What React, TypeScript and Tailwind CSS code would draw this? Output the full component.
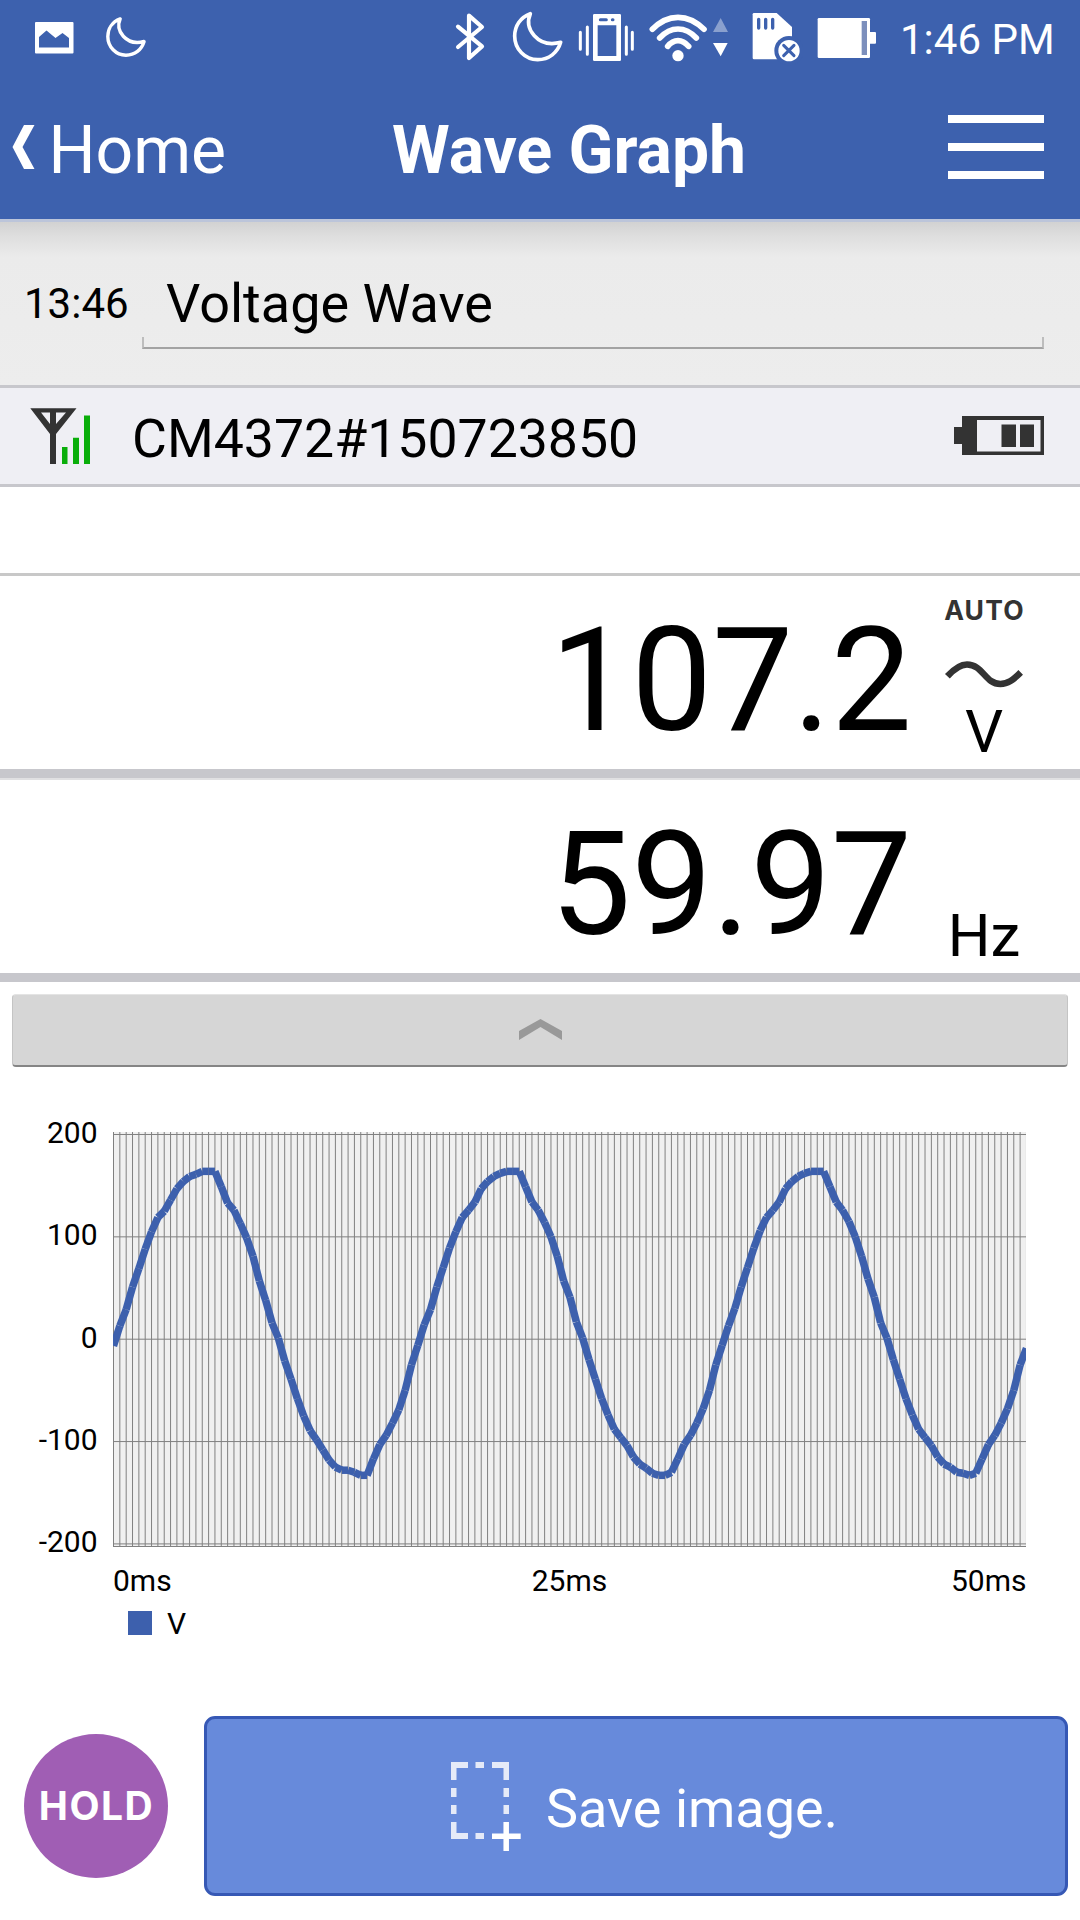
import * as React from "react";
import { useState } from "react";

// sampled voltage, 144 intervals over 50ms
const samples = [
  -6.6, 13, 29, 51, 69, 88, 105, 119, 125, 136, 147, 154, 159, 161, 164, 164,
  164, 149, 133, 126, 113, 99, 81, 57, 38, 16, 1, -21, -39, -58, -75, -89, -98,
  -108, -118, -125, -128, -128, -130, -133, -133, -117, -103, -94, -82, -69,
  -50, -25, -6, 14, 29, 51, 70, 89, 105, 119, 126, 134, 147, 154, 159, 162,
  164, 164, 164, 149, 134, 126, 114, 100, 81, 57, 41, 17, 1, -20, -39, -58,
  -74, -88, -96, -104, -115, -122, -126, -131, -133, -133, -130, -117, -103,
  -94, -82, -68, -50, -25, -6, 13, 30, 51, 70, 89, 106, 119, 126, 134, 147,
  154, 159, 162, 164, 164, 164, 149, 134, 126, 115, 100, 81, 59, 41, 16, 1,
  -20, -39, -58, -74, -88, -96, -104, -115, -122, -125, -130, -131, -133, -131,
  -117, -103, -94, -82, -68, -50, -25, -9,
];

const LEFT = 113.5;
const STEP = 6.34;
const ZERO = 273.2;
const px = (i: number) => LEFT + i * STEP;
const py = (v: number) => ZERO - v * 1.0235;

const MOON =
  "M58 41 C28 52 11 78 11 108 C11 148 42 179 80 179 C114 179 140 158 149 127 C115 136 88 127 70 107 C53 88 48 64 58 41Z";

const StatusBar = () => (
  <div className="flex h-[72px] items-start pl-[33px] text-white">
    <svg width="43" height="72" viewBox="33 0 43 72" fill="currentColor">
      <path
        fillRule="evenodd"
        d="M36 22H72.500a1 1 0 0 1 1 1V52.500a1 1 0 0 1-1 1H36a1 1 0 0 1-1-1V23a1 1 0 0 1 1-1ZM39 47.500H69V38L62.500 33L55.500 38L46.500 30.500L39 37Z"
      />
    </svg>
    <svg
      className="ml-[28px]"
      width="46"
      height="72"
      viewBox="-2 -31 172 274"
      fill="none"
      stroke="currentColor"
      strokeWidth="13"
      strokeLinejoin="round"
    >
      <path d={MOON} />
    </svg>

    <svg
      className="ml-[304px]"
      width="32"
      height="72"
      viewBox="42 0 96 216"
      fill="none"
      stroke="currentColor"
      strokeWidth="12.5"
      strokeLinecap="round"
      strokeLinejoin="round"
    >
      <path d="M54 80L126 139L87 174V47L126 81L54 141" />
    </svg>
    <svg
      className="ml-6"
      width="54"
      height="72"
      viewBox="-3 0 162 216"
      fill="none"
      stroke="currentColor"
      strokeWidth="11"
      strokeLinejoin="round"
    >
      <path d={MOON} />
    </svg>
    <svg className="ml-[13px]" width="58" height="72" viewBox="411 0 174 216">
      <path
        fill="currentColor"
        fillRule="evenodd"
        d="M463 42H539a4 4 0 0 1 4 4V179a4 4 0 0 1-4 4H463a4 4 0 0 1-4-4V46a4 4 0 0 1 4-4ZM473 76V168H529V76Z"
      />
      <path
        stroke="#3d61ae"
        strokeWidth="9"
        strokeLinecap="round"
        d="M481 59H499M517 59H519"
      />
      <path
        stroke="currentColor"
        strokeWidth="9"
        strokeLinecap="round"
        d="M421 97V148M442 81V163M559 81V163M577 97V148"
      />
    </svg>
    <svg className="ml-3" width="83" height="72" viewBox="621 0 249 216">
      <g fill="none" stroke="white" strokeWidth="17" strokeLinecap="round">
        <path d="M637 88Q672 52 714 52T792 88" />
        <path d="M659 114Q684 87 714 87T769 114" />
        <path d="M683 139Q697 122 714 122T746 139" />
      </g>
      <circle cx="714" cy="167" r="17" fill="white" />
      <path d="M842 54L864 96H819Z" fill="white" opacity=".4" />
      <path d="M819 129H863L842 169Z" fill="white" />
    </svg>
    <svg className="ml-[21px]" width="52" height="72" viewBox="33 0 156 216">
      <path
        fill="white"
        d="M42 39H110L156 81V178H42a4 4 0 0 1-4-4V43a4 4 0 0 1 4-4Z"
      />
      <path
        stroke="#3d61ae"
        strokeWidth="10"
        strokeLinecap="round"
        d="M56 58V84M77 58V84M98 58V84"
      />
      <circle cx="147" cy="152" r="44" fill="#3d61ae" />
      <circle cx="147" cy="152" r="32" fill="white" />
      <path
        stroke="#3d61ae"
        strokeWidth="9"
        strokeLinecap="round"
        d="M131 136L162 167M162 136L131 167"
      />
    </svg>
    <svg className="ml-[13px]" width="62" height="72" viewBox="228 0 186 216">
      <rect x="233" y="54" width="157" height="120" rx="4" fill="white" />
      <rect x="386" y="96" width="22" height="35" rx="3" fill="white" />
      <rect x="365" y="63" width="16" height="102" fill="#7c8fbc" />
    </svg>
    <span className="ml-[22px] text-[42px] leading-[79px] whitespace-nowrap">
      1:46 PM
    </span>
  </div>
);

const Header = () => (
  <div className="grid h-[147px] grid-cols-[1fr_auto_1fr] items-center text-[66px] leading-[80px] text-white">
    <button className="flex items-center pl-[12px]">
      <svg width="23" height="44" viewBox="0 0 23 44" className="mt-[3px]">
        <path d="M12 0H22.500L10.500 22L22.500 44H12L.5 22Z" fill="white" />
      </svg>
      <span className="ml-[13.5px] pt-[11px]">Home</span>
    </button>
    <h1 className="ml-[58px] pt-[11px] font-bold whitespace-nowrap">
      Wave Graph
    </h1>
    <button className="mt-[3px] mr-9 flex flex-col gap-5 justify-self-end">
      <span className="h-2 w-24 bg-white"></span>
      <span className="h-2 w-24 bg-white"></span>
      <span className="h-2 w-24 bg-white"></span>
    </button>
  </div>
);

const DeviceRow = () => (
  <div className="flex h-[102px] items-center border-y-[3px] border-[#c7c7cc] bg-[#efeff4] pr-9 pl-7">
    <svg width="64" height="60" viewBox="28 406 64 60">
      <path
        fill="#333"
        fillRule="evenodd"
        d="M30.300 408.300H76.500L56 434V464H50V434ZM41 412.500L50 424V412.500ZM56 412.500V424L66 412.500Z"
      />
      <path
        fill="#0aae0a"
        d="M62 447H67.500V464H62ZM73 437.700H79V464H73ZM84 415.500H90V464H84Z"
      />
    </svg>
    <span className="ml-10 pt-[5px] text-[53.6px] leading-[64px]">
      CM4372#150723850
    </span>
    <svg className="mb-[1px] ml-auto" width="90" height="39" viewBox="0 0 90 39">
      <path d="M0 11H8V0H90V39H8V28H0Z" fill="#333" />
      <rect x="23" y="4" width="63.500" height="31.500" fill="#efeff4" />
      <path d="M47.500 8.500H62V31H47.500ZM66 8.500H80V31H66Z" fill="#333" />
    </svg>
  </div>
);

const Readout = (props: { value: string; children: React.ReactNode }) => (
  <div className="flex h-[193px] items-start justify-end pr-6">
    <span className="text-[144px] leading-[209px]">{props.value}</span>
    <div className="flex h-full w-36 flex-col items-center pt-5">
      {props.children}
    </div>
  </div>
);

const WaveChart = () => (
  <svg width="1080" height="540" viewBox="0 0 1080 540" className="block">
    <defs>
      <clipPath id="plot">
        <rect x="113" y="60" width="913" height="424" />
      </clipPath>
    </defs>
    <rect x="113" y="66" width="913" height="415" fill="#f0f0f0" />
    <g clipPath="url(#plot)">
      {samples.map((_, i) => (
        <line
          key={i}
          x1={px(i)}
          x2={px(i)}
          y1="66"
          y2="481"
          stroke="#808080"
        />
      ))}
      {[200, 100, 0, -100, -200].map((v) => (
        <line
          key={v}
          x1="113"
          x2="1026"
          y1={py(v)}
          y2={py(v)}
          stroke="#808080"
        />
      ))}
      <line x1="113" x2="1026" y1="480.5" y2="480.5" stroke="#808080" />
      {/* every segment is stroked on its own */}
      {samples.slice(1).map((v, i) => (
        <line
          key={i}
          x1={px(i)}
          y1={py(samples[i])}
          x2={px(i + 1)}
          y2={py(v)}
          stroke="#3d60ad"
          strokeWidth="7.500"
        />
      ))}
    </g>
    <g fontSize="30" textAnchor="end">
      {[200, 100, 0, -100, -200].map((v) => (
        <text key={v} x="97.500" y={py(v) + 8.5}>
          {v}
        </text>
      ))}
    </g>
    <g fontSize="30">
      <text x="113" y="525">
        0ms
      </text>
      <text x="569.500" y="525" textAnchor="middle">
        25ms
      </text>
      <text x="1026.500" y="525" textAnchor="end">
        50ms
      </text>
    </g>
  </svg>
);

const App = () => {
  const [title, setTitle] = useState("Voltage Wave");

  return (
    <div className="h-[1920px] w-[1080px] overflow-hidden bg-white font-[Roboto,sans-serif] text-black">
      <div className="h-[222px] border-b-[3px] border-[#bcc5da] bg-[#3d61ae]">
        <StatusBar />
        <Header />
      </div>

      {/* time and comment */}
      <div className="flex h-[163px] bg-[linear-gradient(#d2d2d2,#dedede_14px,#ebebeb_35px,#ededed)] pr-9 pl-6">
        <span className="w-[118px] text-[42px] leading-[163px]">13:46</span>
        <div className="flex-1">
          <input
            className="block h-[115px] w-full bg-transparent pt-[48px] pl-6 text-[54px] leading-[67px] outline-none"
            value={title}
            onChange={(e) => setTitle(e.target.value)}
          />
          <div className="h-[12px] border-x-2 border-b-2 border-x-[#bdbdbd] border-b-[#a3a3a3]"></div>
        </div>
      </div>

      <DeviceRow />
      <div className="h-[89px] border-b-[3px] border-[#c8c8c8]"></div>

      {/* measured values */}
      <Readout value="107.2">
        <span className="ml-[1px] font-[Inter,sans-serif] text-[26.5px] leading-[29px] font-bold tracking-[1.2px] text-[#333]">
          AUTO
        </span>
        <svg width="84" height="36" viewBox="0 0 84 36" className="mt-[31px]">
          <path
            d="M5.400 20.300C12 13 18 8.500 25 8.500C41 8.500 43 28 58.400 28C66 28 71 24 78.700 16.400"
            fill="none"
            stroke="#333"
            strokeWidth="6.500"
          />
        </svg>
        <span className="mt-[10px] text-[60px] leading-[60px]">V</span>
      </Readout>
      <div className="h-[11px] border-b-2 border-[#e0e0e2] bg-[#c7c7cc]"></div>
      <Readout value="59.97">
        <span className="mt-[106px] text-[60px] leading-[60px]">Hz</span>
      </Readout>
      <div className="h-[9px] bg-[#c7c7cc]"></div>

      <button className="mx-3 mt-3 flex h-[73px] w-[1056px] justify-center rounded-[4px] border-x border-t border-b-2 border-x-[#c4c4c4] border-t-[#e4e4e4] border-b-[#858585] bg-[#d6d6d6] pt-6">
        <svg width="43" height="21" viewBox="0 0 43 21">
          <path d="M0 12L21.500 0L43 12V21L21.500 8L0 21Z" fill="#999" />
        </svg>
      </button>

      <div className="-mt-px">
        <WaveChart />
      </div>
      <div className="flex h-[34px] items-center pl-32 text-[30px]">
        <span className="h-6 w-6 bg-[#3d60ad]"></span>
        <span className="ml-[15px] pt-[2px] leading-[34px]">V</span>
      </div>

      {/* bottom buttons */}
      <div className="mt-[76px] flex h-[180px] items-center pr-3 pl-6">
        <button className="h-36 w-36 rounded-full bg-[#a05eb4] pl-[1px] font-[Inter,sans-serif] text-[39px] font-bold tracking-[1.5px] text-white">
          HOLD
        </button>
        <button className="ml-9 flex h-full flex-1 rounded-[11px] border-[3px] border-[#3658b5] bg-[#678adb] pt-[43px] pl-[244px] text-[54px] text-white">
          <svg width="70" height="89" viewBox="451 1762 70 89">
            <path
              fill="#e5eaf8"
              d="M451 1762H468V1768H456.500V1780H451ZM475.500 1762H484V1768H475.500ZM492 1762H509V1780H503.500V1768H492ZM451 1788H456.500V1797H451ZM503.500 1788H509V1797H503.500ZM451 1805H456.500V1814H451ZM503.500 1805H509V1814H503.500ZM451 1822H456.500V1833H468V1839H451ZM475.500 1833H484V1839H475.500Z"
            />
            <path
              stroke="white"
              strokeWidth="5.500"
              d="M492 1836.300H520.700M506.200 1822V1851"
            />
          </svg>
          <span className="ml-[25px] pt-[15px] leading-[64px]">
            Save image.
          </span>
        </button>
      </div>
    </div>
  );
};

export default App;
